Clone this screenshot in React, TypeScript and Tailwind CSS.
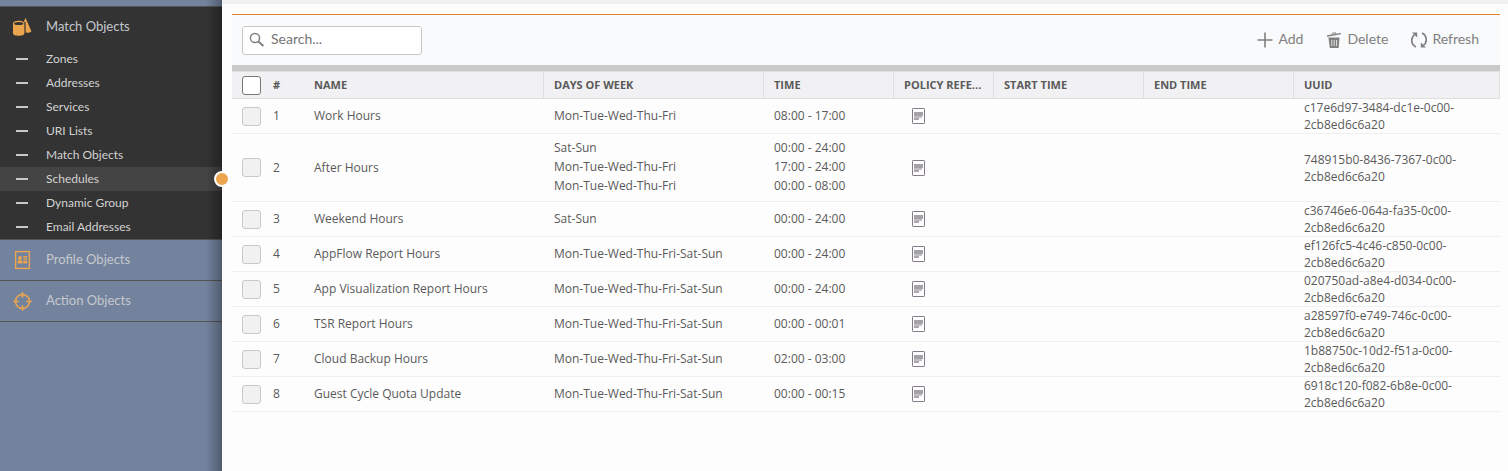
import type { ReactNode } from "react";

const objectLinks = [
  "Zones",
  "Addresses",
  "Services",
  "URI Lists",
  "Match Objects",
  "Schedules",
  "Dynamic Group",
  "Email Addresses",
];

const WEEKDAYS = "Mon-Tue-Wed-Thu-Fri";
const ALL_DAYS = "Mon-Tue-Wed-Thu-Fri-Sat-Sun";

const schedules = [
  { name: "Work Hours", days: [WEEKDAYS], times: ["08:00 - 17:00"], uuid: "c17e6d97-3484-dc1e-0c00-2cb8ed6c6a20" },
  {
    name: "After Hours",
    days: ["Sat-Sun", WEEKDAYS, WEEKDAYS],
    times: ["00:00 - 24:00", "17:00 - 24:00", "00:00 - 08:00"],
    uuid: "748915b0-8436-7367-0c00-2cb8ed6c6a20",
  },
  { name: "Weekend Hours", days: ["Sat-Sun"], times: ["00:00 - 24:00"], uuid: "c36746e6-064a-fa35-0c00-2cb8ed6c6a20" },
  { name: "AppFlow Report Hours", days: [ALL_DAYS], times: ["00:00 - 24:00"], uuid: "ef126fc5-4c46-c850-0c00-2cb8ed6c6a20" },
  { name: "App Visualization Report Hours", days: [ALL_DAYS], times: ["00:00 - 24:00"], uuid: "020750ad-a8e4-d034-0c00-2cb8ed6c6a20" },
  { name: "TSR Report Hours", days: [ALL_DAYS], times: ["00:00 - 00:01"], uuid: "a28597f0-e749-746c-0c00-2cb8ed6c6a20" },
  { name: "Cloud Backup Hours", days: [ALL_DAYS], times: ["02:00 - 03:00"], uuid: "1b88750c-10d2-f51a-0c00-2cb8ed6c6a20" },
  { name: "Guest Cycle Quota Update", days: [ALL_DAYS], times: ["00:00 - 00:15"], uuid: "6918c120-f082-6b8e-0c00-2cb8ed6c6a20" },
];

function ShapesIcon() {
  return (
    <svg width="20" height="20" viewBox="0 0 20 20" fill="#eba54f" aria-hidden="true">
      <path d="M13.6 1 L19.4 14.2 C18.2 15.6 15.8 16 13.6 15.6 L13.6 5.6 L11.8 4.4 Z" />
      <path d="M1 6.4 V16.6 C1 19.6 12.4 19.6 12.4 16.6 V6.4 C12.4 3 1 3 1 6.4 Z" />
      <ellipse cx="6.7" cy="6.5" rx="4.6" ry="1.5" fill="#333" />
    </svg>
  );
}

function ProfileIcon() {
  return (
    <svg width="20" height="20" viewBox="0 0 20 20" fill="#eba54f" aria-hidden="true">
      <rect x="3.6" y="1.6" width="13.8" height="16.8" fill="none" stroke="#eba54f" strokeWidth="1.4" />
      <circle cx="8" cy="8" r="1.9" />
      <path d="M5.6 13.6 V11.6 Q5.6 10 8 10 Q10.4 10 10.4 11.6 V13.6 Z" />
      <path d="M11.2 6h4v1.4h-4zM11.2 8.4h4v1.4h-4zM11.2 10.8h4v2.8h-4z" />
    </svg>
  );
}

function TargetIcon() {
  return (
    <svg width="20" height="20" viewBox="0 0 20 20" fill="none" stroke="#eba54f" strokeWidth="1.6" aria-hidden="true">
      <circle cx="10.5" cy="10.5" r="7" />
      <path d="M10.5 1.2v5.6M10.5 14.2v5.6M1.2 10.5h5.6M14.2 10.5h5.6" />
    </svg>
  );
}

function SearchIcon() {
  return (
    <svg width="16" height="16" viewBox="0 0 16 16" fill="none" stroke="#808080" aria-hidden="true">
      <circle cx="6" cy="6" r="4.6" strokeWidth="1.5" />
      <path d="M9.4 9.4 L14.4 14" strokeWidth="2" />
    </svg>
  );
}

function PlusIcon() {
  return (
    <svg width="16" height="16" viewBox="0 0 16 16" fill="none" stroke="#808080" strokeWidth="1.6" aria-hidden="true">
      <path d="M8 .5v15M.5 8h15" />
    </svg>
  );
}

function TrashIcon() {
  return (
    <svg width="16" height="16" viewBox="0 0 16 16" fill="none" stroke="#808080" aria-hidden="true">
      <path d="M1 4 L15 1.6" strokeWidth="1.4" />
      <path d="M6 2.6 L6.4 1.2 L9.6 .8 L10 2" strokeWidth="1" />
      <path d="M2.4 5.4 H13.6 L12.6 16 H3.8 Z" fill="#808080" stroke="none" />
      <path d="M5.8 8 V14 M8.2 8 V14 M10.6 8 V14" stroke="#f9fafc" strokeWidth=".8" />
    </svg>
  );
}

function RefreshIcon() {
  return (
    <svg width="16" height="16" viewBox="0 0 16 16" fill="none" stroke="#808080" strokeWidth="1.7" aria-hidden="true">
      <path d="M5 15 C-.4 12.4 -.4 5.4 3.6 2.6" />
      <path d="M11 1 C16.4 3.6 16.4 10.6 12.4 13.4" />
      <path d="M1 .4 H6.2 V5.6 Z M15 15.6 H9.8 V10.4 Z" fill="#808080" stroke="none" />
    </svg>
  );
}

function PolicyIcon() {
  return (
    <svg width="13" height="16" viewBox="0 0 13 16" aria-hidden="true">
      <rect x=".5" y=".5" width="12" height="15" rx=".6" fill="#fff" stroke="#857b88" />
      <path d="M2 4h9v4H2z" fill="#a3a3a6" />
      <path d="M2 8h8v2H2z" fill="#c0bdc4" />
      <path d="M2 10h5v2H2z" fill="#a9a6ad" />
    </svg>
  );
}

function SectionLink({ icon, label }: { icon: ReactNode; label: string }) {
  return (
    <a href="#" className="flex h-10 items-center gap-3 pl-3 text-[13px] text-[#c5c8cc]">
      <span className="w-[22px]">{icon}</span>
      {label}
    </a>
  );
}

function ToolbarButton({ icon, label }: { icon: ReactNode; label: string }) {
  return (
    <button type="button" className="flex items-center gap-[5px] text-sm">
      {icon}
      <span className="pb-[2px]">{label}</span>
    </button>
  );
}

function Sidebar() {
  return (
    <nav className="relative w-[222px] shrink-0 bg-[#73839e] pt-[6px]">
      <div className="border-y border-[#555] bg-[#333]">
        <SectionLink icon={<ShapesIcon />} label="Match Objects" />
        <ul>
          {objectLinks.map((label) => (
            <li key={label} className={label === "Schedules" ? "relative bg-[#444]" : ""}>
              <a href="#" className="flex h-6 items-center gap-[18px] pl-4 text-xs text-[#d2d2d2]">
                <span className="h-[2px] w-3 bg-[#c8c8c8]" />
                {label}
              </a>
              {label === "Schedules" && (
                <span className="absolute -right-2 top-1 z-20 h-4 w-4 rounded-full border-2 border-white bg-[#eba54f]" />
              )}
            </li>
          ))}
        </ul>
      </div>
      <div className="border-b border-[#555]">
        <SectionLink icon={<ProfileIcon />} label="Profile Objects" />
      </div>
      <div className="border-b border-[#555]">
        <SectionLink icon={<TargetIcon />} label="Action Objects" />
      </div>
      <div className="pointer-events-none absolute inset-y-0 right-0 w-4 bg-linear-to-r from-transparent to-black/30" />
    </nav>
  );
}

const headCell = "whitespace-nowrap border-r border-[#dfdfe1] px-[10px] text-left font-bold";

export default function App() {
  return (
    <div className="flex min-h-screen bg-[#fdfdfd] font-['Lato',sans-serif] text-[#5a5a5a]">
      <Sidebar />
      <main className="min-w-0 flex-1">
        <div className="h-1 bg-[#f0f1f3]" />
        <section className="mt-[10px] mr-2 ml-[10px]">
          <div className="flex h-[51px] items-center justify-between border-t border-[#e0812f] bg-[#f9fafc] pr-[21px] pl-[10px]">
            <label className="flex h-[29px] w-[180px] items-center gap-[6px] rounded-[3px] border border-[#c8c8c8] bg-white pl-[6px]">
              <SearchIcon />
              <input
                type="text"
                aria-label="Search"
                placeholder="Search..."
                className="min-w-0 flex-1 pb-[2px] text-sm outline-none placeholder:text-[#757575]"
              />
            </label>
            <div className="flex gap-[23px] text-[#808080]">
              <ToolbarButton icon={<PlusIcon />} label="Add" />
              <ToolbarButton icon={<TrashIcon />} label="Delete" />
              <ToolbarButton icon={<RefreshIcon />} label="Refresh" />
            </div>
          </div>
          <div className="h-[6px] bg-[#cacaca]" />
          <table className="w-full table-fixed border-separate border-spacing-0 font-['Open_Sans',sans-serif] text-xs">
            <colgroup>
              <col className="w-[31px]" />
              <col className="w-[41px]" />
              <col className="w-[240px]" />
              <col className="w-[220px]" />
              <col className="w-[130px]" />
              <col className="w-[100px]" />
              <col className="w-[150px]" />
              <col className="w-[150px]" />
              <col />
            </colgroup>
            <thead>
              <tr className="h-7 bg-[#f1f1f3] text-[11px] *:border-y *:border-[#dfdfe1]">
                <th className="pl-[10px]">
                  <input
                    type="checkbox"
                    aria-label="Select all"
                    className="block h-[19px] w-[19px] appearance-none rounded-[3px] border border-[#777] bg-white"
                  />
                </th>
                <th className="px-[10px] text-left font-bold">#</th>
                <th className={headCell}>NAME</th>
                <th className={headCell}>DAYS OF WEEK</th>
                <th className={headCell}>TIME</th>
                <th className={headCell}>POLICY REFE...</th>
                <th className={headCell}>START TIME</th>
                <th className={headCell}>END TIME</th>
                <th className={headCell}>UUID</th>
              </tr>
            </thead>
            <tbody>
              {schedules.map((item, i) => (
                <tr key={item.name} className="*:border-b *:border-[#eff1f1]">
                  <td className="pl-[10px]">
                    <input
                      type="checkbox"
                      aria-label={`Select ${item.name}`}
                      className="block h-[19px] w-[19px] appearance-none rounded-[3px] border border-[#c8c8c8] bg-[#f1f1f1]"
                    />
                  </td>
                  <td className="px-[10px]">{i + 1}</td>
                  <td className="px-[10px]">{item.name}</td>
                  <td className="px-[10px] pt-1 pb-[6px] leading-[19px]">
                    {item.days.map((line, n) => (
                      <div key={n}>{line}</div>
                    ))}
                  </td>
                  <td className="px-[10px] pt-1 pb-[6px] leading-[19px]">
                    {item.times.map((line, n) => (
                      <div key={n}>{line}</div>
                    ))}
                  </td>
                  <td className="pl-[18px]">
                    <button type="button" aria-label="Policy references" className="block">
                      <PolicyIcon />
                    </button>
                  </td>
                  <td />
                  <td />
                  <td className="px-[10px] leading-[17px]">{item.uuid}</td>
                </tr>
              ))}
            </tbody>
          </table>
        </section>
      </main>
    </div>
  );
}
